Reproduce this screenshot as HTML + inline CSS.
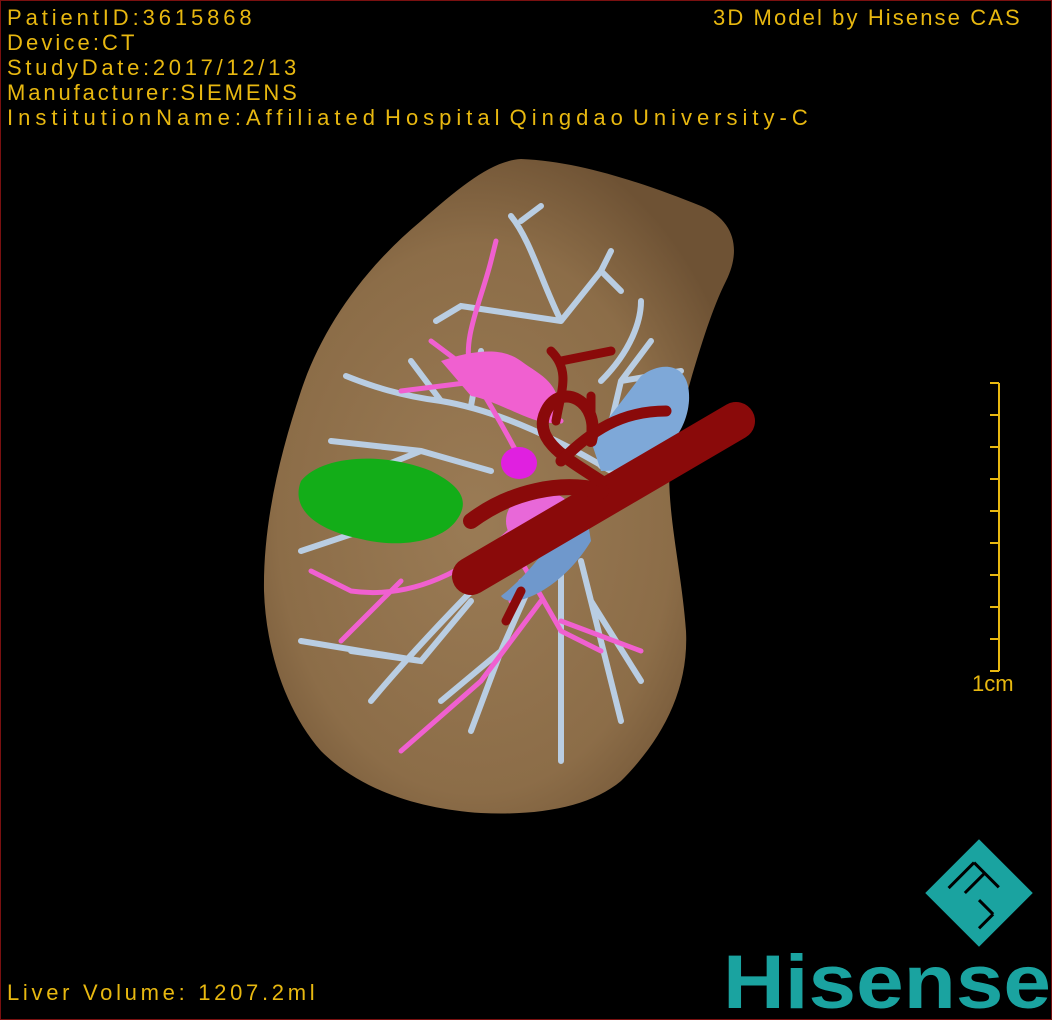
<!DOCTYPE html>
<html><head><style>
html,body{margin:0;padding:0;background:#000;}
#w{position:relative;width:1052px;height:1020px;background:#000;overflow:hidden;box-sizing:border-box;border:1px solid #7a1010;}
.t{position:absolute;color:#e8b810;font-family:"Liberation Sans","Noto Sans CJK SC",sans-serif;font-size:22px;white-space:nowrap;line-height:25px;}
</style></head><body><div id="w">
<svg width="1052" height="1020" style="position:absolute;left:0;top:0">
<defs>
<radialGradient id="lg" cx="0.45" cy="0.55" r="0.6">
<stop offset="0" stop-color="#9a7b55"/><stop offset="0.7" stop-color="#8c6d48"/><stop offset="1" stop-color="#6e5234"/>
</radialGradient>
</defs>
<path d="M520,158 C580,160 650,185 700,205 C735,220 740,250 725,280 C705,320 690,380 672,440 C660,490 680,560 685,630 C688,690 660,740 620,780 C590,805 540,815 480,812 C420,808 360,790 320,750 C285,710 265,650 263,590 C262,520 280,450 300,390 C320,330 360,270 420,220 C460,185 490,160 520,158 Z" fill="url(#lg)"/>
<g fill="none" stroke="#b9cde2" stroke-width="6" stroke-linecap="round">
<path d="M610,470 C560,440 500,410 440,400 C400,395 370,385 345,375"/>
<path d="M440,400 L410,360 M470,405 L480,350 M600,465 L620,380 L650,340 M620,380 L680,370"/>
<path d="M560,320 C540,280 530,240 510,215 M560,320 L600,270 L620,290 M560,320 L460,305 L435,320"/>
<path d="M530,530 C480,580 420,640 370,700 M470,600 L420,660 L300,640 M420,660 L350,650"/>
<path d="M540,560 L500,650 L470,730 M500,650 L440,700 M560,560 L560,760 M580,560 L620,720 M590,600 L640,680"/>
<path d="M490,470 L420,450 L330,440 M420,450 L370,470 M300,550 L360,530"/>
<path d="M600,380 C630,350 640,320 640,300 M520,220 L540,205 M600,270 L610,250"/>
</g>
<g fill="none" stroke="#f060d0" stroke-width="5" stroke-linecap="round">
<path d="M520,460 C500,420 480,390 470,370 C460,340 480,300 490,260 L495,240"/>
<path d="M470,370 L430,340 M480,380 L400,390 M500,400 L560,420"/>
<path d="M520,520 C480,560 420,600 350,590 L310,570 M400,580 L340,640"/>
<path d="M520,560 L560,630 L600,650 M540,600 L480,680 L400,750"/>
<path d="M560,620 L640,650 M520,580 L510,600"/>
</g>
<path d="M440,360 C470,350 500,345 520,360 C540,375 560,380 560,420 C540,430 500,400 470,395 Z" fill="#f060d0"/>
<ellipse cx="518" cy="462" rx="18" ry="16" fill="#e020e0"/>
<ellipse cx="540" cy="520" rx="35" ry="30" fill="#e868d8"/>
<path d="M640,375 C660,360 690,360 688,400 C685,440 650,470 600,470 L590,440 Z" fill="#7ea8d8"/>
<path d="M580,480 C560,540 520,580 500,595 C510,610 560,590 590,540 Z" fill="#6f98cc"/>
<path d="M300,480 C320,455 380,450 430,470 C460,485 470,500 455,520 C440,540 400,548 360,538 C310,528 290,505 300,480 Z" fill="#13ad18"/>
<g fill="none" stroke="#8a0a0a" stroke-linecap="round">
<path d="M470,575 L735,420" stroke-width="38"/>
<path d="M600,490 C560,480 510,490 470,520" stroke-width="16"/>
<path d="M600,480 C570,460 530,440 545,410 C560,380 600,400 590,440" stroke-width="12"/>
<path d="M560,460 C590,430 620,410 665,410" stroke-width="11"/>
<path d="M555,420 C560,390 570,370 550,350 M560,360 L610,350 M590,440 L590,395" stroke-width="9"/>
<path d="M520,590 L505,620" stroke-width="9"/>
</g>
<g stroke="#e8b810" stroke-width="2">
<line x1="998" y1="382" x2="998" y2="670"/>
<path d="M989,382H998M989,414H998M989,446H998M989,478H998M989,510H998M989,542H998M989,574H998M989,606H998M989,638H998M989,670H998"/>
</g>
<g transform="translate(978,892) rotate(45)">
<rect x="-38" y="-38" width="76" height="76" fill="#1aa3a0"/>
<path d="M-25,-18 L-25,18 M-25,-18 L10,-18 M-10,-18 L-10,10 M5,5 L25,5 M25,5 L25,25" stroke="#000" stroke-width="3" fill="none"/>
</g>
<text x="722" y="1007" font-family="Liberation Sans,sans-serif" font-weight="bold" font-size="76" fill="#1aa3a0" textLength="328" lengthAdjust="spacingAndGlyphs">Hisense</text>
</svg>
<div class="t" style="left:6px;top:4px;letter-spacing:3.9px">PatientID:3615868</div>
<div class="t" style="left:6px;top:29px;letter-spacing:3.1px">Device:CT</div>
<div class="t" style="left:6px;top:54px;letter-spacing:3.7px">StudyDate:2017/12/13</div>
<div class="t" style="left:6px;top:79px;letter-spacing:2.9px">Manufacturer:SIEMENS</div>
<div class="t" style="left:6px;top:104px;letter-spacing:5px;word-spacing:-6px">InstitutionName:Affiliated Hospital Qingdao University-C</div>
<div class="t" style="left:712px;top:4px;letter-spacing:2.1px">3D Model by Hisense CAS</div>
<div class="t" style="left:6px;top:979px;letter-spacing:3.7px">Liver Volume: 1207.2ml</div>
<div class="t" style="left:971px;top:670px;letter-spacing:0">1cm</div>
</div></body></html>
